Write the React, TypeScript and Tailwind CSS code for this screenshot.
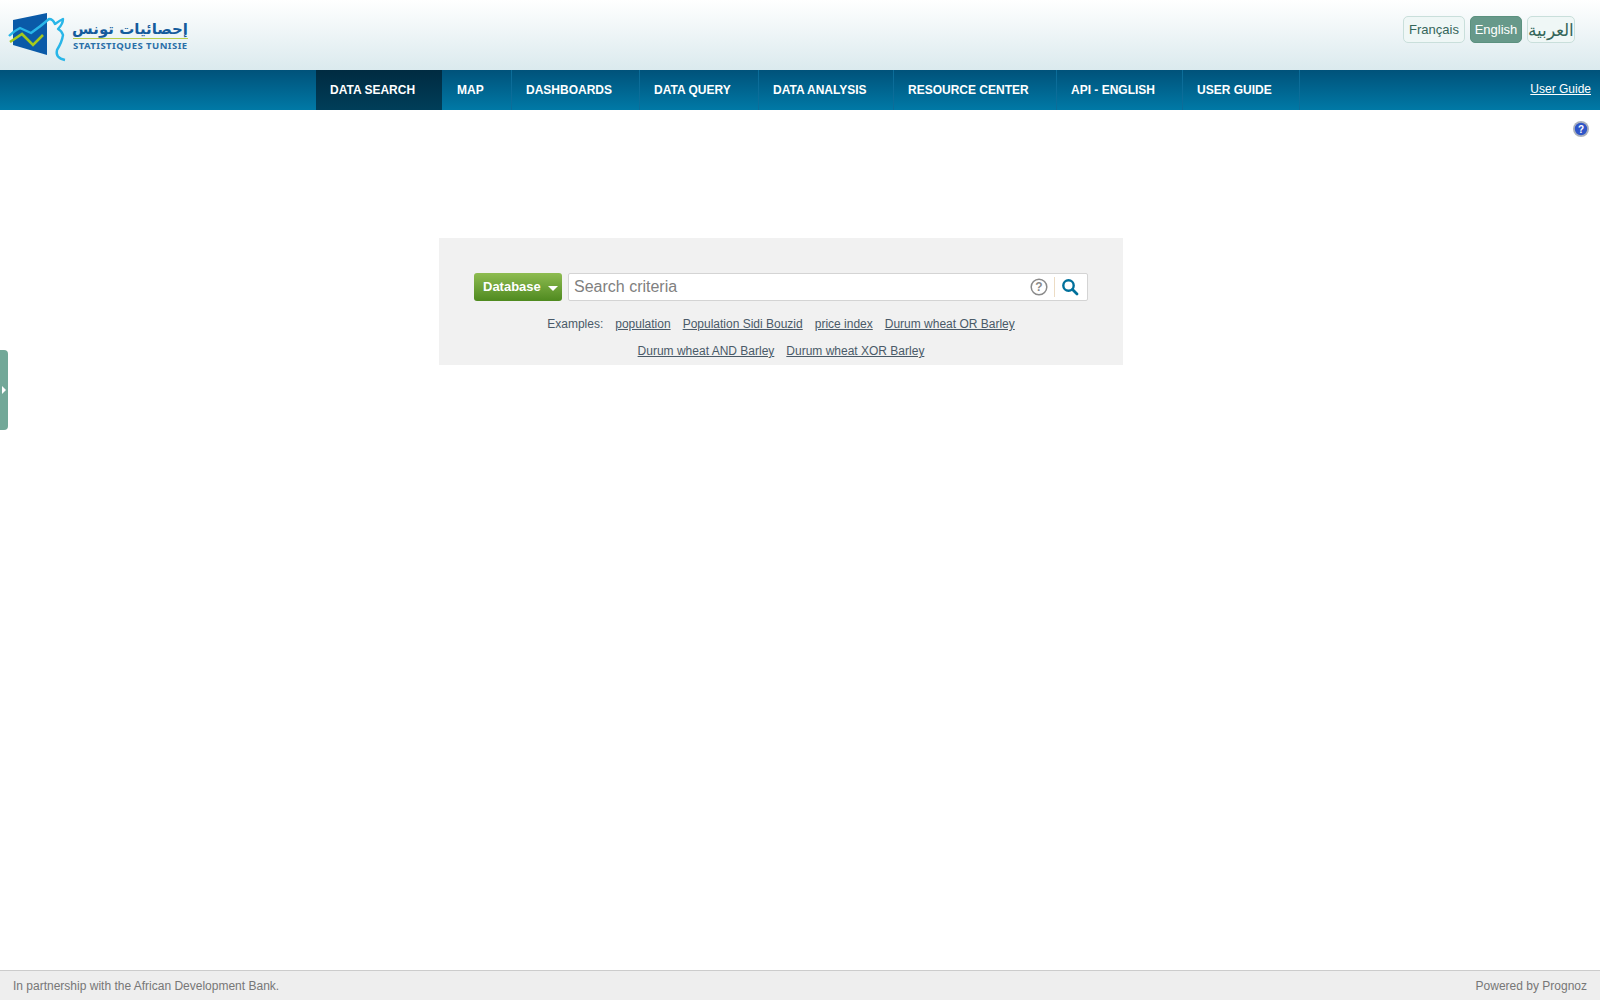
import React from 'react';

const navItems = [
  { label: 'DATA SEARCH', width: 'w-[126px]', active: true },
  { label: 'MAP', width: 'w-[70px]', pad: 'pl-[15px]' },
  { label: 'DASHBOARDS', width: 'w-[128px]' },
  { label: 'DATA QUERY', width: 'w-[119px]' },
  { label: 'DATA ANALYSIS', width: 'w-[135px]' },
  { label: 'RESOURCE CENTER', width: 'w-[163px]' },
  { label: 'API - ENGLISH', width: 'w-[126px]' },
  { label: 'USER GUIDE', width: 'w-[117px]' },
];

const firstRow = ['population', 'Population Sidi Bouzid', 'price index', 'Durum wheat OR Barley'];
const secondRow = ['Durum wheat AND Barley', 'Durum wheat XOR Barley'];

const Logo = () => (
  <div className="flex items-start">
    <svg width="72" height="62" viewBox="0 0 72 62" className="shrink-0">
      <polygon points="13,20 47,13 47,55 13,45" fill="#0a5aa8" />
      <path d="M9,36 Q14,31 20,28 L31,33 Q41,26 49,19 Q53,19 55,24 Q59,21 63,19 Q63,24 58,29 Q62,31 63,35 Q62,42 57,50 Q55,58 65,60" fill="none" stroke="#29b6e8" strokeWidth="2.4" strokeLinejoin="round" />
      <polyline points="10,42 22,34 33,45 43,35" fill="none" stroke="#a4c81e" strokeWidth="2.6" />
    </svg>
    <div className="flex flex-col w-[115px] ml-[1px] mt-[20px]">
      <div className="text-[15px] leading-[18px] h-[18px] font-bold text-[#155c9c] font-['DejaVu_Sans',sans-serif] whitespace-nowrap" dir="rtl">إحصائيات تونس</div>
      <div className="h-[1px] bg-[#b6cf4a]" />
      <div className="mt-[2px] text-[9.5px] leading-[10px] font-bold tracking-[0.45px] text-[#2a6fa8] whitespace-nowrap font-['Noto_Sans',sans-serif]">STATISTIQUES TUNISIE</div>
    </div>
  </div>
);

export default function App() {
  return (
    <div className="min-h-screen flex flex-col bg-white font-['Liberation_Sans',Arial,sans-serif] relative">
      <header className="h-[70px] flex justify-between bg-gradient-to-b from-white to-[#dbeaee] pr-[25px]">
        <Logo />
        <div className="flex items-start gap-[5px] pt-[16px] text-[13px] text-[#35665a]">
          <button className="h-[27px] w-[62px] rounded-[5px] border border-[#c9dfdb] bg-[#eff7f6]">Français</button>
          <button className="h-[27px] w-[52px] rounded-[5px] border border-[#5b917f] bg-[#67998a] text-white">English</button>
          <button className="h-[27px] w-[48px] rounded-[5px] border border-[#c9dfdb] bg-[#eff7f6] text-[17px] leading-[27px] font-['DejaVu_Serif',serif]">العربية</button>
        </div>
      </header>

      <nav className="h-[40px] flex bg-gradient-to-b from-[#00527a] to-[#0079a6] pl-[316px] pr-[9px]">
        {navItems.map(item => (
          <a
            key={item.label}
            href="#"
            className={`${item.width} ${item.pad ?? 'pl-[14px]'} flex items-center text-[12px] font-bold text-white whitespace-nowrap ${item.active ? 'bg-gradient-to-b from-[#002b41] to-[#003e59]' : 'border-r border-[#0c6d99]'}`}
          >
            {item.label}
          </a>
        ))}
        <a href="#" className="ml-auto self-center text-[12px] text-white underline -mt-[2px]">User Guide</a>
      </nav>

      <main className="flex-1 flex flex-col">
        <div className="flex justify-end pt-[11px] pr-[11px]">
          <svg width="16" height="16" viewBox="0 0 16 16">
            <circle cx="8" cy="8" r="8" fill="#aab0bc" />
            <circle cx="8" cy="8" r="6.2" fill="#2f55c8" />
            <text x="8" y="11.5" textAnchor="middle" fontSize="10" fontWeight="700" fill="#fff" fontFamily="Liberation Sans">?</text>
          </svg>
        </div>

        <section className="ml-[439px] mt-[101px] w-[684px] h-[127px] bg-[#f1f1f1] pt-[35px]">
          <div className="flex ml-[35px] w-[614px] h-[28px] gap-[6px]">
            <button className="w-[88px] h-[28px] flex items-center pl-[9px] rounded-[3px] bg-gradient-to-b from-[#8ebc50] to-[#4f8a1f] text-[13px] font-bold text-white">
              Database
              <span className="ml-[7px] mt-[2px] border-x-[5px] border-t-[5px] border-x-transparent border-t-white" />
            </button>
            <div className="flex-1 flex items-center bg-white border border-[#d4d4d4] rounded-[2px] pl-[5px]">
              <span className="flex-1 text-[16px] text-[#808080]">Search criteria</span>
              <svg width="18" height="18" viewBox="0 0 18 18" className="mr-[6px]">
                <circle cx="9" cy="9" r="7.8" fill="none" stroke="#8a8a8a" strokeWidth="1.5" />
                <text x="9" y="13" textAnchor="middle" fontSize="12" fontWeight="700" fill="#8a8a8a" fontFamily="Liberation Sans">?</text>
              </svg>
              <span className="w-[1px] h-[20px] bg-[#ecdcc4]" />
              <svg width="18" height="18" viewBox="0 0 18 18" className="ml-[6px] mr-[8px]">
                <circle cx="7.5" cy="7.5" r="5.2" fill="none" stroke="#00709b" strokeWidth="2.4" />
                <line x1="11.5" y1="11.5" x2="16" y2="16" stroke="#00709b" strokeWidth="2.8" strokeLinecap="round" />
              </svg>
            </div>
          </div>
          <div className="mt-[10px] ml-[35px] w-[614px] text-[12px] leading-[27px] text-[#4a5a68]">
            <div className="flex justify-center gap-[12px]">
              <span>Examples:</span>
              {firstRow.map(label => <a key={label} href="#" className="underline">{label}</a>)}
            </div>
            <div className="flex justify-center gap-[12px]">
              {secondRow.map(label => <a key={label} href="#" className="underline">{label}</a>)}
            </div>
          </div>
        </section>
      </main>

      <footer className="h-[30px] flex items-center justify-between px-[13px] bg-[#eeeeee] border-t border-[#cccccc] text-[12px] text-[#777777]">
        <span>In partnership with the African Development Bank.</span>
        <span>Powered by Prognoz</span>
      </footer>

      <div className="absolute left-0 top-[350px] w-[8px] h-[80px] rounded-r-[4px] bg-[#72a898] flex items-center">
        <span className="ml-[2px] border-y-[4px] border-l-[4px] border-y-transparent border-l-white" />
      </div>
    </div>
  );
}
